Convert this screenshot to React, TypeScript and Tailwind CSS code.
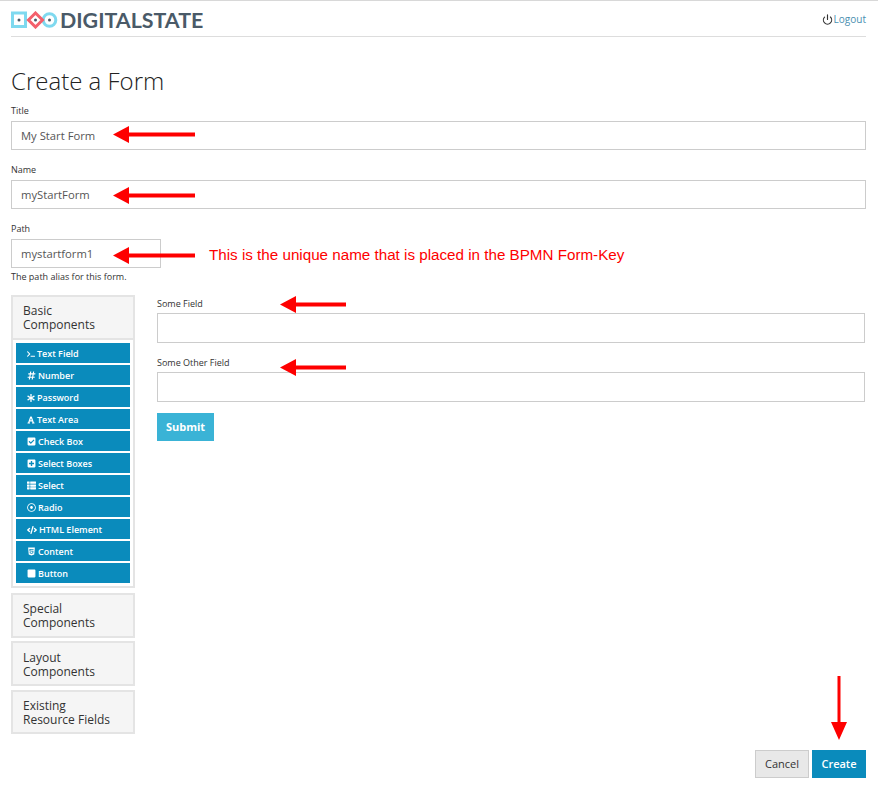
import { Power } from "lucide-react";
import { FaTerminal, FaHashtag, FaAsterisk, FaFont, FaCheckSquare, FaPlusSquare, FaThList, FaRegDotCircle, FaCode, FaHtml5, FaStop } from "react-icons/fa";
import type { ReactNode } from "react";

function Arrow({ className, length = 82 }: { className: string; length?: number }) {
  return (
    <svg className={`absolute ${className}`} width={length} height="17" viewBox={`0 0 ${length} 17`}>
      <path d={`M0 8.5 L16 0 L16 6.5 L${length} 6.5 L${length} 10.5 L16 10.5 L16 17 Z`} fill="#fe0000" />
    </svg>
  );
}

function Logo() {
  return (
    <svg width="47" height="18" viewBox="0 0 47 18" className="shrink-0">
      <rect x="1.5" y="2" width="13" height="13.5" fill="none" stroke="#7fd9ef" strokeWidth="3" />
      <circle cx="8" cy="9" r="1.5" fill="#4a5a68" />
      <circle cx="38.5" cy="9" r="6.3" fill="none" stroke="#7fd9ef" strokeWidth="3" />
      <circle cx="38.5" cy="9" r="1.5" fill="#4a5a68" />
      <path d="M24.5 2 L31.5 9 L24.5 16 L17.5 9 Z" fill="none" stroke="#f4606c" strokeWidth="3" />
      <circle cx="24.5" cy="9" r="1.5" fill="#4a5a68" />
    </svg>
  );
}

function Field({ label, value, className }: { label: string; value: string; className?: string }) {
  return (
    <div className={className}>
      <label className="block text-[9px] leading-[11px] text-[#333333] mb-[5px]">{label}</label>
      <div className="h-[29px] border border-[#cccccc] bg-white px-[9px] pt-[1px] flex items-center text-[11.25px] text-[#555555]">
        {value}
      </div>
    </div>
  );
}

// the fields of the form preview are a pixel taller and have no value
function PreviewField({ label, className }: { label: string; className?: string }) {
  return (
    <div className={className}>
      <label className="block text-[9px] leading-[11px] text-[#333333] mb-[4px]">{label}</label>
      <div className="h-[30px] border border-[#cccccc] bg-white" />
    </div>
  );
}

const components: { label: string; icon: ReactNode }[] = [
  { label: "Text Field", icon: <FaTerminal size={8} /> },
  { label: "Number", icon: <FaHashtag size={9} /> },
  { label: "Password", icon: <FaAsterisk size={8} /> },
  { label: "Text Area", icon: <FaFont size={8} /> },
  { label: "Check Box", icon: <FaCheckSquare size={9} /> },
  { label: "Select Boxes", icon: <FaPlusSquare size={9} /> },
  { label: "Select", icon: <FaThList size={9} /> },
  { label: "Radio", icon: <FaRegDotCircle size={9} /> },
  { label: "HTML Element", icon: <FaCode size={10} /> },
  { label: "Content", icon: <FaHtml5 size={9} /> },
  { label: "Button", icon: <FaStop size={9} /> },
];

function PanelHeading({ children, className }: { children: ReactNode; className?: string }) {
  return (
    <div className={`border-2 border-[#e4e4e4] bg-[#f5f5f5] px-[10px] text-[12px] leading-[14px] text-[#333333] ${className ?? ""}`}>
      {children}
    </div>
  );
}

export default function App() {
  return (
    <div className="relative h-[805px] w-[878px] overflow-hidden bg-white border-t border-[#d8d8d8] pl-[11px] pr-[12px] font-['Open_Sans',sans-serif]">
      <header className="h-[36px] border-b border-[#dddddd] flex items-start justify-between">
        <div className="flex items-center gap-[2px] pt-[10px]">
          <Logo />
          <span className="font-['Lato',sans-serif] font-bold text-[21.4px] leading-[18px] text-[#4a5a68]">DIGITALSTATE</span>
        </div>
        <div className="flex items-center gap-[1px] pt-[12px] text-[10px] leading-[12px] text-[#4a8fb0]">
          <Power size={11} strokeWidth={2.5} className="text-[#333333]" />
          Logout
        </div>
      </header>

      <h1 className="mt-[29px] text-[24px] leading-[30px] font-light text-[#222222]">Create a Form</h1>

      <Field className="mt-[9px]" label="Title" value="My Start Form" />
      <Field className="mt-[14px]" label="Name" value="myStartForm" />
      <Field className="mt-[14px] w-[150px]" label="Path" value="mystartform1" />
      <p className="mt-[3px] text-[9px] leading-[12px] text-[#333333]">The path alias for this form.</p>

      <div className="mt-[12px] flex">
        <aside className="w-[124px] shrink-0">
          <PanelHeading className="pt-[7px] pb-[6px]">Basic<br />Components</PanelHeading>
          <div className="border-x-2 border-b-2 border-[#e4e4e4] px-[3px] pt-[3px] pb-[3px] flex flex-col gap-[2px]">
            {components.map((c) => (
              <div key={c.label} className="h-[20px] bg-[#0a8bbc] text-white flex items-center gap-[2px] pl-[11px] pt-[1px] text-[9px] font-semibold">
                {c.icon}
                {c.label}
              </div>
            ))}
          </div>
          <PanelHeading className="mt-[5px] pt-[7px] pb-[6px]">Special<br />Components</PanelHeading>
          <PanelHeading className="mt-[3px] pt-[8px] pb-[5px]">Layout<br />Components</PanelHeading>
          <PanelHeading className="mt-[4px] pt-[7px] pb-[5px]">Existing<br />Resource Fields</PanelHeading>
        </aside>

        <div className="ml-[22px] mr-[1px] flex-1">
          <PreviewField className="mt-[3px]" label="Some Field" />
          <PreviewField className="mt-[14px]" label="Some Other Field" />
          <button className="mt-[11px] block h-[28px] w-[57px] bg-[#3ab3d6] text-white text-[11px] font-bold">Submit</button>
        </div>
      </div>

      <div className="absolute right-[12px] top-[749px] flex gap-[3px]">
        <button className="h-[28px] w-[54px] border border-[#cccccc] bg-[#e8e8e8] pt-[1px] text-[11px] text-[#333333]">Cancel</button>
        <button className="h-[28px] w-[54px] bg-[#0a8bbc] pt-[1px] text-white text-[11px] font-semibold">Create</button>
      </div>

      {/* annotations drawn over the screenshot */}
      <Arrow className="left-[113px] top-[125px]" />
      <Arrow className="left-[113px] top-[186px]" />
      <Arrow className="left-[113px] top-[246px]" />
      <Arrow className="left-[280px] top-[295px]" length={66} />
      <Arrow className="left-[280px] top-[358px]" length={66} />
      <svg className="absolute left-[830px] top-[675px]" width="18" height="64" viewBox="0 0 18 64">
        <path d="M7.5 0 H10.5 V46 H17 L9 64 L1 46 H7.5 Z" fill="#fe0000" />
      </svg>
      <span className="absolute left-[209px] top-[245px] font-['Liberation_Sans',sans-serif] text-[15.2px] leading-[18px] text-[#fe0000]">
        This is the unique name that is placed in the BPMN Form-Key
      </span>
    </div>
  );
}
